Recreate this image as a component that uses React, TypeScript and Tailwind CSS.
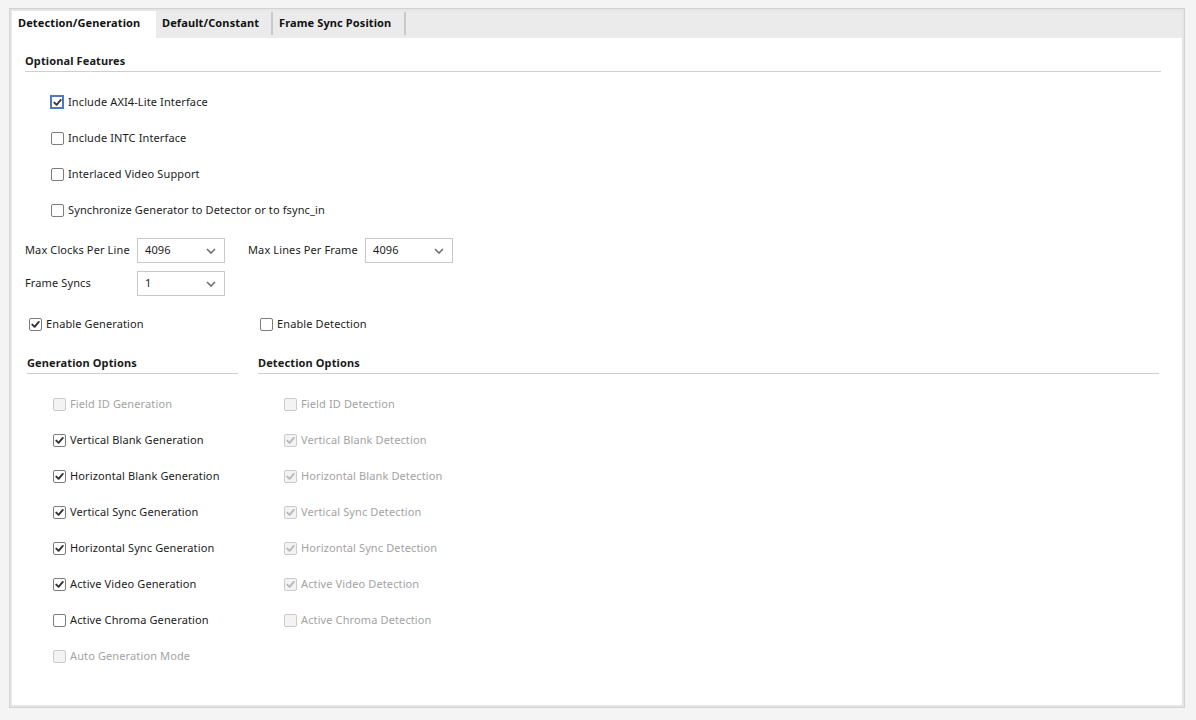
import React from 'react'

const font = { fontFamily: '"Noto Sans", "Open Sans", sans-serif' }

function Check({ color }: { color: string }) {
  return (
    <svg width="9" height="9" viewBox="0 0 9 9" className="block">
      <path d="M1.3 4.6 L3.6 6.8 L7.8 1.9" fill="none" stroke={color} strokeWidth="1.9" strokeLinecap="round" strokeLinejoin="round" />
    </svg>
  )
}

function Box({ checked, disabled, focused }: { checked?: boolean; disabled?: boolean; focused?: boolean }) {
  if (focused) {
    return (
      <span className="w-[14px] h-[14px] flex items-center justify-center border-2 border-[#4b79c6] bg-white shrink-0">
        {checked && <Check color="#3a3a3a" />}
      </span>
    )
  }
  return (
    <span
      className={
        disabled
          ? 'w-[13px] h-[13px] flex items-center justify-center rounded-[2px] border border-[#cbcbcb] bg-[#f3f3f3] shrink-0'
          : 'w-[13px] h-[13px] flex items-center justify-center rounded-[2px] border border-[#7c7c7c] bg-white shrink-0'
      }
    >
      {checked && <Check color={disabled ? '#b8b8b8' : '#333333'} />}
    </span>
  )
}

function CheckRow({
  label,
  checked,
  disabled,
  focused,
}: {
  label: string
  checked?: boolean
  disabled?: boolean
  focused?: boolean
}) {
  return (
    <div className="h-[36px] flex items-center pl-[26px]">
      <div className={focused ? 'flex items-center gap-[4px] -ml-[1px]' : 'flex items-center gap-[4px]'}>
        <Box checked={checked} disabled={disabled} focused={focused} />
        <span className={disabled ? 'text-[#a3a3a3]' : 'text-[#1c1c1c]'}>{label}</span>
      </div>
    </div>
  )
}

function Select({ value }: { value: string }) {
  return (
    <div className="w-[88px] h-[25px] border border-[#c9c9c9] bg-white flex items-center justify-between pl-[7px] pr-[8px]">
      <span className="text-[#1c1c1c]">{value}</span>
      <svg width="10" height="6" viewBox="0 0 10 6">
        <path d="M1 1 L5 5 L9 1" fill="none" stroke="#6e6e6e" strokeWidth="1.6" />
      </svg>
    </div>
  )
}

function SectionHeader({ title, className }: { title: string; className?: string }) {
  return (
    <div className={'pb-[3px] border-b border-[#cfcfcf] ' + (className ?? '')}>
      <div className="font-bold leading-[15px] text-[#1a1a1a]">{title}</div>
    </div>
  )
}

export default function App() {
  const tabs = ['Detection/Generation', 'Default/Constant', 'Frame Sync Position']

  return (
    <div className="min-h-screen bg-[#f4f4f4] pt-[8px] pl-[9px] text-[11px] tracking-[0.12px]" style={font}>
      <div className="w-[1176px] h-[700px] border border-[#d2d2d2]">
        <div className="h-full border-2 border-[#e5e5e5] bg-white flex flex-col">
          {/* tab strip */}
          <div className="h-[27px] bg-[#ebebeb] flex shrink-0">
            <div className="w-[144px] bg-white flex items-center pl-[6px] pb-[2px] font-bold text-[#111]">{tabs[0]}</div>
            <div className="w-[115px] flex items-center pl-[6px] pb-[2px] font-bold text-[#111]">{tabs[1]}</div>
            <div className="w-[2px] mt-[1px] h-[23px] bg-[#c9c9c9]" />
            <div className="w-[131px] flex items-center pl-[6px] pb-[2px] font-bold text-[#111]">{tabs[2]}</div>
            <div className="w-[2px] mt-[1px] h-[23px] bg-[#c9c9c9]" />
          </div>

          <div className="pt-[15px] pl-[13px] flex flex-col">
            <SectionHeader title="Optional Features" className="mr-[21px]" />

            <div className="mt-[12px]">
              <CheckRow label="Include AXI4-Lite Interface" checked focused />
              <CheckRow label="Include INTC Interface" />
              <CheckRow label="Interlaced Video Support" />
              <CheckRow label="Synchronize Generator to Detector or to fsync_in" />
            </div>

            <div className="mt-[10px] flex flex-col gap-[8px]">
              <div className="flex items-center">
                <span className="w-[112px] text-[#1c1c1c]">Max Clocks Per Line</span>
                <Select value="4096" />
                <span className="ml-[23px] w-[117px] text-[#1c1c1c]">Max Lines Per Frame</span>
                <Select value="4096" />
              </div>
              <div className="flex items-center">
                <span className="w-[112px] text-[#1c1c1c]">Frame Syncs</span>
                <Select value="1" />
              </div>
            </div>

            <div className="ml-[2px] mt-[18px] flex">
              <div className="w-[211px] flex flex-col">
                <div className="h-[20px] flex items-center pl-[2px] gap-[4px]">
                  <Box checked />
                  <span className="text-[#1c1c1c]">Enable Generation</span>
                </div>
                <SectionHeader title="Generation Options" className="mt-[21px]" />
                <div className="mt-[12px]">
                  <CheckRow label="Field ID Generation" disabled />
                  <CheckRow label="Vertical Blank Generation" checked />
                  <CheckRow label="Horizontal Blank Generation" checked />
                  <CheckRow label="Vertical Sync Generation" checked />
                  <CheckRow label="Horizontal Sync Generation" checked />
                  <CheckRow label="Active Video Generation" checked />
                  <CheckRow label="Active Chroma Generation" />
                  <CheckRow label="Auto Generation Mode" disabled />
                </div>
              </div>

              <div className="ml-[20px] mr-[23px] flex-1 flex flex-col">
                <div className="h-[20px] flex items-center pl-[2px] gap-[4px]">
                  <Box />
                  <span className="text-[#1c1c1c]">Enable Detection</span>
                </div>
                <SectionHeader title="Detection Options" className="mt-[21px]" />
                <div className="mt-[12px]">
                  <CheckRow label="Field ID Detection" disabled />
                  <CheckRow label="Vertical Blank Detection" checked disabled />
                  <CheckRow label="Horizontal Blank Detection" checked disabled />
                  <CheckRow label="Vertical Sync Detection" checked disabled />
                  <CheckRow label="Horizontal Sync Detection" checked disabled />
                  <CheckRow label="Active Video Detection" checked disabled />
                  <CheckRow label="Active Chroma Detection" disabled />
                </div>
              </div>
            </div>
          </div>
        </div>
      </div>
    </div>
  )
}
